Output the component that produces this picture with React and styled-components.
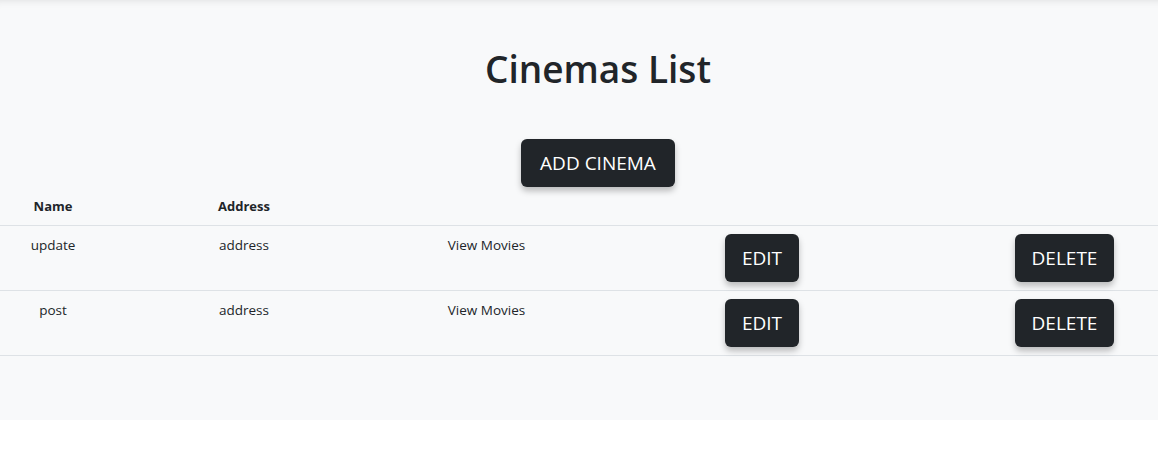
import React from 'react';
import styled, {createGlobalStyle} from 'styled-components';

const GlobalStyle = createGlobalStyle`
  body {
    margin: 0;
    background: #fff;
    font-family: "Open Sans", "Noto Sans", sans-serif;
    color: #212529;
    overflow: hidden;
  }
`

const Page = styled.div`
  width: 1196px;
  background: #f8f9fa;
  box-shadow: inset 0 8px 8px -8px rgba(0, 0, 0, 0.12);
  padding: 40px 0 64px;
  display: flex;
  flex-direction: column;
  align-items: center;
`

const Title = styled.h1`
  margin: 0;
  font-size: 37px;
  font-weight: 600;
  line-height: 58px;
  color: #212529;
`

const DarkButton = styled.button`
  font-family: "Open Sans", sans-serif;
  font-size: 19px;
  color: #fff;
  background: #212529;
  border: none;
  border-radius: 6px;
  height: 48px;
  padding: 0 ${p => p.$pad || 17}px;
  box-shadow: 0 4px 6px rgba(0, 0, 0, 0.25);
  cursor: pointer;
`

const AddWrap = styled.div`
  margin-top: 41px;
`

const Table = styled.div`
  align-self: stretch;
  margin-top: 2px;
`

const Row = styled.div`
  display: grid;
  grid-template-columns: 106px 276px 209px 342px 263px;
  border-bottom: 1px solid #dee2e6;
  height: ${p => p.$h}px;
`

const Cell = styled.div`
  text-align: center;
  font-size: ${p => (p.$head ? 13 : 13.5)}px;
  font-weight: ${p => (p.$head ? 700 : 400)};
  line-height: 20px;
  padding-top: ${p => p.$top}px;
`

const rows = [
  {name: 'update', address: 'address'},
  {name: 'post', address: 'address'},
]

export default function App() {
  return (
    <>
      <GlobalStyle/>
      <Page>
        <Title>Cinemas List</Title>
        <AddWrap>
          <DarkButton $pad={19}>ADD CINEMA</DarkButton>
        </AddWrap>
        <Table>
          <Row $h={36}>
            <Cell $head $top={7}>Name</Cell>
            <Cell $head $top={7}>Address</Cell>
          </Row>
          {rows.map((r, i) => (
            <Row key={i} $h={64}>
              <Cell $top={9}>{r.name}</Cell>
              <Cell $top={9}>{r.address}</Cell>
              <Cell $top={9}>View Movies</Cell>
              <Cell $top={8}><DarkButton>EDIT</DarkButton></Cell>
              <Cell $top={8}><DarkButton>DELETE</DarkButton></Cell>
            </Row>
          ))}
        </Table>
      </Page>
    </>
  )
}
